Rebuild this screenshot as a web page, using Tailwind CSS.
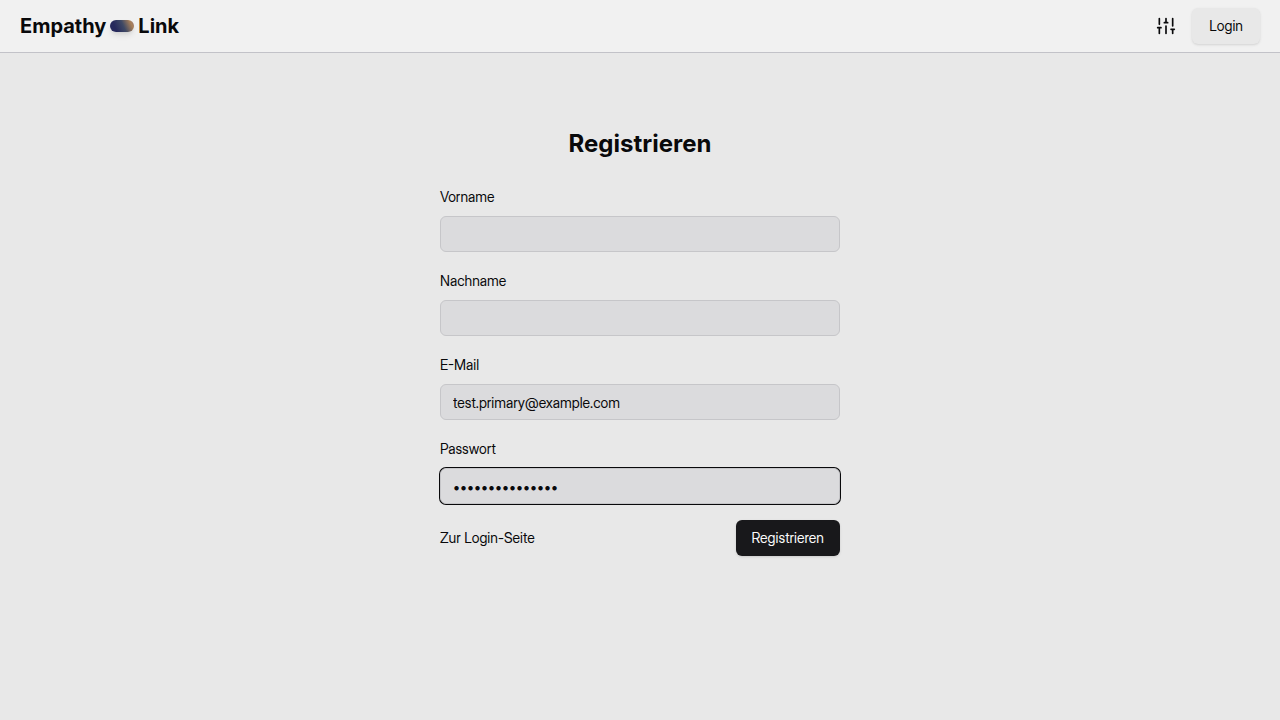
<!DOCTYPE html>
<html lang="de">
<head>
<meta charset="utf-8">
<meta name="viewport" content="width=device-width, initial-scale=1">
<title>Empathy Link – Registrieren</title>
<script src="https://cdn.jsdelivr.net/npm/@tailwindcss/browser@4"></script>
</head>
<body class="flex min-h-screen flex-col bg-[#e8e8e8] font-['Inter_Display','Inter',sans-serif] text-sm font-normal text-[#09090b]">
<header class="flex items-center justify-between border-b border-[#c2c2c8] bg-[#f1f1f1] px-5 py-2">
  <a href="#" class="flex items-center gap-1 font-['Inter',sans-serif] text-xl font-bold">
    <span>Empathy</span>
    <span class="h-3 w-6 rounded-full bg-[linear-gradient(65deg,#26295c_25%,#3f4965_55%,#aa8058_85%,#8f7480)] shadow-md"></span>
    <span>Link</span>
  </a>
  <div class="flex items-center gap-4">
    <button type="button" aria-label="Einstellungen">
      <svg class="size-5" viewBox="0 0 24 24" fill="none" stroke="currentColor" stroke-width="2" stroke-linecap="round" stroke-linejoin="round"><path d="M4 21v-7M4 10V3M12 21v-9M12 8V3M20 21v-5M20 12V3M2 14h4M10 8h4M18 16h4"/></svg>
    </button>
    <a href="#" class="flex h-9 items-center rounded-md bg-[#e8e8e8] px-[17px] shadow-sm">Login</a>
  </div>
</header>
<main class="mx-auto w-full max-w-[400px] pt-[75px]">
  <h1 class="text-center font-['Inter',sans-serif] text-2xl font-bold">Registrieren</h1>
  <form class="mt-[27px] flex flex-col gap-[19px]">
    <div class="flex flex-col gap-[9px]">
      <label for="first">Vorname</label>
      <input id="first" type="text" class="h-9 w-full rounded-md border border-[#c6c6c9] bg-[#dbdbdd] px-3">
    </div>
    <div class="flex flex-col gap-[9px]">
      <label for="last">Nachname</label>
      <input id="last" type="text" class="h-9 w-full rounded-md border border-[#c6c6c9] bg-[#dbdbdd] px-3">
    </div>
    <div class="flex flex-col gap-[9px]">
      <label for="mail">E-Mail</label>
      <input id="mail" type="email" value="test.primary@example.com" class="h-9 w-full rounded-md border border-[#c6c6c9] bg-[#dbdbdd] px-3">
    </div>
    <div class="flex flex-col gap-[9px]">
      <label for="password">Passwort</label>
      <input id="password" type="password" value="secretpassword1" class="h-9 w-full rounded-md border border-[#c6c6c9] bg-[#dbdbdd] px-3 ring-1 ring-[#09090b]">
    </div>
    <div class="-mt-[3px] flex items-center justify-between">
      <a href="#">Zur Login-Seite</a>
      <button type="submit" class="h-9 rounded-md bg-[#18181b] px-4 text-[#fafafa] shadow-sm">Registrieren</button>
    </div>
  </form>
</main>
</body>
</html>
